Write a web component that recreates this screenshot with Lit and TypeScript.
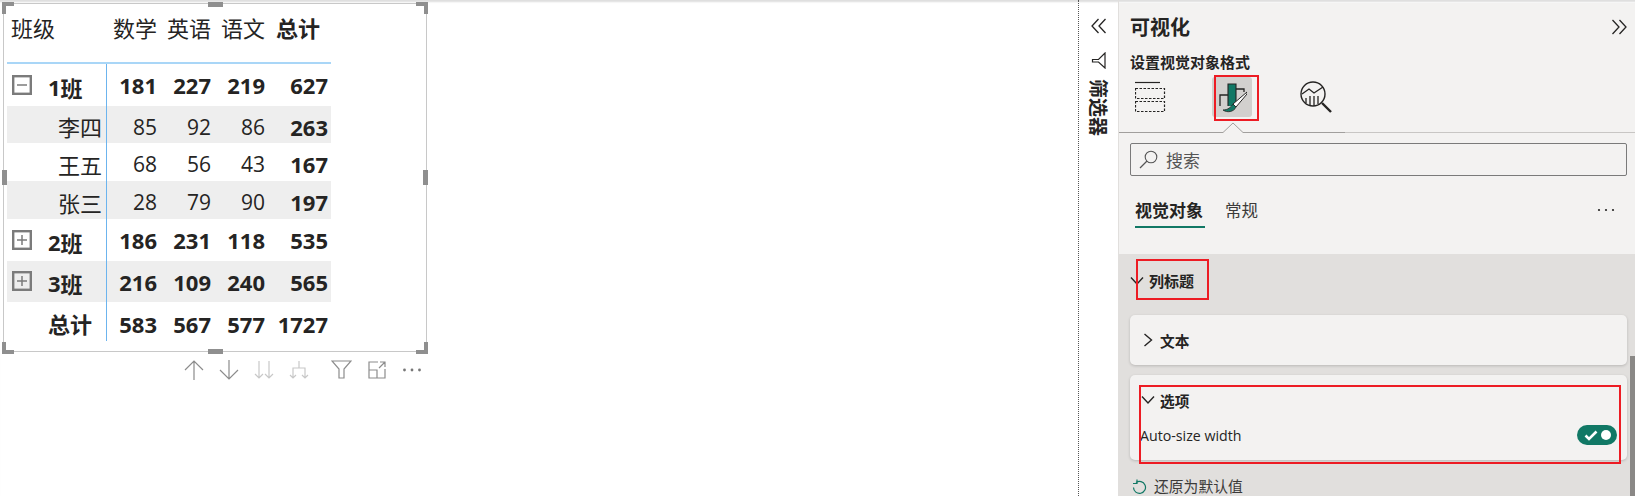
import { LitElement, html, css, svg } from "lit";
import { customElement } from "lit/decorators.js";

type Row = { label: string; num?: string; kind: "group" | "child" | "total"; box?: "plus" | "minus"; vals: number[]; alt?: boolean; h: number };

const rows: Row[] = [
  { label: "班", num: "1", kind: "group", box: "minus", vals: [181, 227, 219, 627], h: 42 },
  { label: "李四", kind: "child", vals: [85, 92, 86, 263], alt: true, h: 37 },
  { label: "王五", kind: "child", vals: [68, 56, 43, 167], h: 38 },
  { label: "张三", kind: "child", vals: [28, 79, 90, 197], alt: true, h: 38 },
  { label: "班", num: "2", kind: "group", box: "plus", vals: [186, 231, 118, 535], h: 42 },
  { label: "班", num: "3", kind: "group", box: "plus", vals: [216, 109, 240, 565], alt: true, h: 41 },
  { label: "总计", kind: "total", vals: [583, 567, 577, 1727], h: 39 },
];

const chevDown = svg`<path d="M1 1.5 L7 8 L13 1.5" fill="none" stroke="#252423" stroke-width="1.4"/>`;

@customElement("app-root")
export class AppRoot extends LitElement {
  static styles = css`
    :host { display: block; width: 1635px; height: 496px; overflow: hidden; background: #fff; color: #252423;
      font-family: "Open Sans", "Noto Sans CJK SC", sans-serif; }
    svg { display: block; flex: none; }
    .page { display: flex; height: 496px; box-shadow: inset 0 3px 2px -1px #dedede; }
    .canvas { flex: none; padding: 3px 0 0 3px; box-sizing: border-box; border-right: 1px dotted #555; width: 1079px; }
    .visual { position: relative; width: 424px; height: 349px; box-sizing: border-box; border: 1px solid #c8c8c8; padding-left: 3px; background: #fff; }
    .handle { position: absolute; background: #8f8f8f; }
    .h-t { left: 204px; top: -2px; width: 15px; height: 5px; }
    .h-b { left: 204px; bottom: -3px; width: 15px; height: 5px; }
    .h-l { left: -2px; top: 166px; width: 5px; height: 15px; }
    .h-r { right: -2px; top: 166px; width: 5px; height: 15px; }
    .corner { position: absolute; width: 12px; height: 12px; border: 0 solid #8f8f8f; box-sizing: border-box; }
    .c-tl { left: -2px; top: -2px; border-width: 4px 0 0 4px; }
    .c-tr { right: -2px; top: -2px; border-width: 4px 4px 0 0; }
    .c-bl { left: -2px; bottom: -3px; border-width: 0 0 4px 4px; }
    .c-br { right: -2px; bottom: -3px; border-width: 0 4px 4px 0; }
    .row { display: grid; grid-template-columns: 100px 54px 54px 54px 62px; width: 324px; align-items: center; font-size: 22px; }
    .head { height: 60px; box-sizing: border-box; border-bottom: 2px solid #a9d6f7; padding-bottom: 13px; font-family: "Noto Sans CJK SC", sans-serif; line-height: 30px; }
    .head > div { text-align: right; padding-right: 4px; white-space: nowrap; }
    .head > .first { text-align: left; padding-left: 4px; }
    .head > .tot { padding-right: 11px; font-weight: 700; }
    .alt { background: #eeeeee; }
    .label { display: flex; align-items: center; height: 100%; box-sizing: border-box; border-right: 1px solid #6cb4ee; padding: 3px 0 0 5px; font-family: "Noto Sans CJK SC", sans-serif; }
    .label.child { justify-content: flex-end; padding-right: 4px; padding-left: 0; }
    .label.bold { font-weight: 700; }
    .label.total { padding-left: 41px; }
    .box { margin: -4px 16px 0 0; flex: none; }
    .num { text-align: right; padding-right: 4px; font-size: 21px; line-height: 28px; }
    .num:last-child { padding-right: 3px; }
    .num.b, .lnum { font-weight: 700; font-size: 22px; }
    .num.low { padding-top: 4px; }
    .lnum { font-family: "Open Sans", sans-serif; }
    .toolbar { display: flex; align-items: center; gap: 15px; margin: 8px 0 0 181px; height: 20px; }
    .toolbar .sp { margin-left: 7px; }
    .filters { width: 40px; flex: none; border-right: 1px solid #e1dfdd; display: flex; flex-direction: column; align-items: center; padding-top: 18px; box-sizing: border-box; }
    .filter-ico { margin-top: 18px; }
    .vert { writing-mode: vertical-rl; text-orientation: sideways; font-weight: 700; font-size: 19px; line-height: 20px; margin-top: 10px; font-family: "Noto Sans CJK SC", sans-serif; }
    .pane { position: relative; flex: 1; background: #f3f2f1; margin-top: 3px; display: flex; flex-direction: column; min-width: 0; font-family: "Noto Sans CJK SC", sans-serif; }
    .top { padding: 0 8px 0 11px; height: 251px; box-sizing: border-box; flex: none; }
    .title-row { display: flex; justify-content: space-between; align-items: center; height: 36px; padding-top: 11px; box-sizing: border-box; }
    .title { font-size: 20px; font-weight: 700; line-height: 25px; }
    .sub { font-size: 15px; font-weight: 700; line-height: 20px; margin-top: 13px; }
    .icons { position: relative; display: flex; align-items: center; height: 40px; margin-top: 5px; }
    .ico-table { margin-left: 5px; }
    .sel { width: 40px; height: 40px; background: #d2d0ce; border-radius: 3px; display: flex; align-items: center; justify-content: center; margin-left: 46px; }
    .ico-an { margin-left: 48px; }
    .red { position: absolute; border: 2px solid #ed1c24; box-sizing: border-box; pointer-events: none; }
    .red-ico { left: 84px; top: -2px; width: 45px; height: 46px; }
    .rule { position: relative; height: 12px; margin: 5px -8px 0 -11px; }
    .search { display: flex; align-items: center; height: 33px; border: 1px solid #7a7a7a; border-radius: 2px; box-sizing: border-box; margin-top: 9px; padding-left: 8px; font-size: 17px; color: #555; gap: 8px; width: 497px; }
    .tabs { display: flex; align-items: flex-start; margin-top: 18px; font-size: 16.5px; line-height: 32px; padding-left: 5px; }
    .tab { height: 34px; box-sizing: border-box; }
    .tab.on { font-weight: 700; border-bottom: 2px solid #117865; width: 70px; font-size: 17px; white-space: nowrap; }
    .tab.off { margin-left: 20px; color: #3b3a39; }
    .more { margin-left: auto; margin-right: 12px; margin-top: 14px; }
    .gray { flex: 1; background: #e1dfdd; padding: 0 8px 0 11px; position: relative; }
    .sec { position: relative; display: flex; align-items: center; height: 61px; padding-bottom: 8px; box-sizing: border-box; gap: 5px; font-size: 15px; font-weight: 700; }
    .card { background: #f3f2f1; border-radius: 5px; box-shadow: 0 1px 3px rgba(0,0,0,.18); width: 497px; box-sizing: border-box; }
    .c1 { height: 50px; display: flex; align-items: center; padding-left: 13px; gap: 7px; font-size: 14.7px; font-weight: 700; }
    .c2 { position: relative; height: 85px; margin-top: 10px; padding: 16px 6px 0 11px; }
    .c2 .hd { display: flex; align-items: center; gap: 5px; height: 18px; font-size: 14.7px; font-weight: 700; }
    .c2 .auto { display: flex; justify-content: space-between; align-items: center; margin-top: 16px; height: 20px; padding-right: 4px; margin-left: -1px; font-family: "Open Sans", sans-serif; font-size: 14.2px; }
    .toggle { width: 40px; height: 20px; border-radius: 10px; background: #117865; display: flex; align-items: center; justify-content: space-between; padding: 0 6px 0 7px; box-sizing: border-box; }
    .knob { width: 10px; height: 10px; border-radius: 50%; background: #fff; }
    .reset { display: flex; align-items: center; gap: 7px; margin-top: 15px; padding-left: 2px; font-size: 14.8px; color: #3b3a39; line-height: 22px; }
    .red-sec { left: 6px; top: 5px; width: 73px; height: 41px; }
    .red-opt { left: 20px; top: 131px; width: 482px; height: 79px; }
    .scroll { position: absolute; right: 0; top: 102px; bottom: 0; width: 5px; background: #8a8886; }
  `;

  private box(kind: "plus" | "minus") {
    return html`<svg class="box" width="20" height="20" viewBox="0 0 20 20">
      <rect x="1.2" y="1.2" width="17.6" height="17.6" fill="none" stroke="#7b7b7b" stroke-width="2.4"/>
      <path d="M5 10H15" stroke="#7b7b7b" stroke-width="1.5"/>
      ${kind === "plus" ? svg`<path d="M10 5V15" stroke="#7b7b7b" stroke-width="1.5"/>` : ""}
    </svg>`;
  }

  private toolbar() {
    const s = "#8c8c8c", l = "#c8c8c8";
    return html`<div class="toolbar">
      <svg width="20" height="20" viewBox="0 0 20 20"><path d="M1 10L10 1L19 10M10 1V20" fill="none" stroke="${s}" stroke-width="1.2"/></svg>
      <svg width="20" height="20" viewBox="0 0 20 20"><path d="M1 10L10 19L19 10M10 19V0" fill="none" stroke="${s}" stroke-width="1.2"/></svg>
      <svg width="20" height="20" viewBox="0 0 20 20"><path d="M5 1V18M1 14L5 18L9 14M15 1V18M11 14L15 18L19 14" fill="none" stroke="${l}" stroke-width="1.2"/></svg>
      <svg width="20" height="20" viewBox="0 0 20 20"><path d="M10 1V8M4 18V8H16V18M1 15L4 18L7 15M13 15L16 18L19 15" fill="none" stroke="${l}" stroke-width="1.2"/></svg>
      <svg class="sp" width="21" height="20" viewBox="0 0 21 20"><path d="M1 1H20L13 9V18H8V9Z" fill="none" stroke="${s}" stroke-width="1.2"/></svg>
      <svg width="20" height="20" viewBox="0 0 20 20"><path d="M11 2H2V18H18V9M2 10H10V18M12 8L18 2M13 2H18V7" fill="none" stroke="${s}" stroke-width="1.2"/></svg>
      <svg width="20" height="20" viewBox="0 0 20 20"><circle cx="2.5" cy="10" r="1.4" fill="#777"/><circle cx="10" cy="10" r="1.4" fill="#777"/><circle cx="17.5" cy="10" r="1.4" fill="#777"/></svg>
    </div>`;
  }

  render() {
    return html`<div class="page">
      <div class="canvas">
        <div class="visual">
          <div class="row head">
            <div class="first">班级</div><div>数学</div><div>英语</div><div>语文</div><div class="tot">总计</div>
          </div>
          ${rows.map((r) => html`<div class="row ${r.alt ? "alt" : ""}" style="height:${r.h}px">
            <div class="label ${r.kind} ${r.kind !== "child" ? "bold" : ""}">
              ${r.box ? this.box(r.box) : ""}${r.num ? html`<span class="lnum">${r.num}</span>` : ""}<span>${r.label}</span>
            </div>
            ${r.vals.map((v, i) => html`<div class="num ${r.kind !== "child" || i === 3 ? "b" : ""} ${r.kind === "group" ? "" : "low"}">${v}</div>`)}
          </div>`)}
          <i class="handle h-t"></i><i class="handle h-b"></i><i class="handle h-l"></i><i class="handle h-r"></i>
          <i class="corner c-tl"></i><i class="corner c-tr"></i><i class="corner c-bl"></i><i class="corner c-br"></i>
        </div>
        ${this.toolbar()}
      </div>
      <div class="filters">
        <svg width="16" height="16" viewBox="0 0 16 16"><path d="M7.5 1L1 8L7.5 15M14.5 1L8 8L14.5 15" fill="none" stroke="#252423" stroke-width="1.3"/></svg>
        <svg class="filter-ico" width="15" height="17" viewBox="0 0 15 17"><path d="M14 1V16L7.5 10H1.5V7.5H7.5Z" fill="none" stroke="#252423" stroke-width="1.2"/></svg>
        <div class="vert">筛选器</div>
      </div>
      <div class="pane">
        <div class="top">
          <div class="title-row"><div class="title">可视化</div>
            <svg width="16" height="16" viewBox="0 0 16 16"><path d="M1.5 1L8 8L1.5 15M8.5 1L15 8L8.5 15" fill="none" stroke="#252423" stroke-width="1.3"/></svg>
          </div>
          <div class="sub">设置视觉对象格式</div>
          <div class="icons">
            <svg class="ico-table" width="31" height="32" viewBox="0 0 31 32"><path d="M0 1.5H25" stroke="#252423" stroke-width="1.2"/><rect x="0.5" y="7.5" width="29" height="10" fill="none" stroke="#252423" stroke-width="1.2" stroke-dasharray="2.5 1.5"/><rect x="0.5" y="20.5" width="29" height="10" fill="none" stroke="#252423" stroke-width="1.2" stroke-dasharray="2.5 1.5"/></svg>
            <div class="sel">
              <svg width="30" height="34" viewBox="0 0 30 34">
                <rect x="11" y="4" width="8" height="22" fill="#117865"/>
                <path d="M11 26V4H19V24" fill="none" stroke="#252423" stroke-width="1.1"/>
                <path d="M11 15H3V26M19 9H27V12" fill="none" stroke="#252423" stroke-width="1.3"/>
                <path d="M30 12L16 24L19 27L30 14Z" fill="#fff" stroke="#252423" stroke-width="1"/>
                <path d="M16 24C14 27 11 30 6 30C10 33 17 32 19 27Z" fill="#117865" stroke="#252423" stroke-width=".8"/>
              </svg>
            </div>
            <svg class="ico-an" width="33" height="33" viewBox="0 0 33 33">
              <circle cx="13" cy="13" r="12" fill="none" stroke="#252423" stroke-width="1.4"/>
              <path d="M2 13L9 8L14 12L23 6" fill="none" stroke="#252423" stroke-width="1.3"/>
              <path d="M6 17V22M10 15V24M14 15V25M18 15V23" stroke="#252423" stroke-width="1.3"/>
              <path d="M22 22L31 31" stroke="#252423" stroke-width="2.4"/>
            </svg>
            <div class="red red-ico"></div>
          </div>
          <div class="rule"><svg width="516" height="12" viewBox="0 0 516 12">
            <path d="M0 10.5H104L114 1L124 10.5H226" fill="none" stroke="#a19f9d" stroke-width="1"/>
            <path d="M226 10.5H516" fill="none" stroke="#c8c6c4" stroke-width="1"/></svg></div>
          <div class="search">
            <svg width="19" height="19" viewBox="0 0 19 19"><circle cx="12" cy="7" r="5.8" fill="none" stroke="#555" stroke-width="1.1"/><path d="M8 11L1 18" stroke="#555" stroke-width="1.2"/></svg>
            <span>搜索</span>
          </div>
          <div class="tabs">
            <div class="tab on">视觉对象</div><div class="tab off">常规</div>
            <svg class="more" width="18" height="4" viewBox="0 0 18 4"><circle cx="2" cy="2" r="1.1" fill="#252423"/><circle cx="9" cy="2" r="1.1" fill="#252423"/><circle cx="16" cy="2" r="1.1" fill="#252423"/></svg>
          </div>
        </div>
        <div class="gray">
          <div class="sec"><svg width="14" height="10" viewBox="0 0 14 10">${chevDown}</svg><span>列标题</span><div class="red red-sec"></div></div>
          <div class="card c1"><svg width="10" height="14" viewBox="0 0 10 14"><path d="M1.5 1L8.5 7L1.5 13" fill="none" stroke="#252423" stroke-width="1.4"/></svg><span>文本</span></div>
          <div class="card c2">
            <div class="hd"><svg width="14" height="10" viewBox="0 0 14 10">${chevDown}</svg><span>选项</span></div>
            <div class="auto"><span>Auto-size width</span>
              <div class="toggle"><svg width="14" height="11" viewBox="0 0 14 11"><path d="M1.5 5.5L5 9L12.5 1.5" fill="none" stroke="#fff" stroke-width="2.6"/></svg><i class="knob"></i></div>
            </div>
          </div>
          <div class="reset"><svg width="15" height="15" viewBox="0 0 15 15"><path d="M4 2.5A6 6 0 1 1 1.5 7.5" fill="none" stroke="#117865" stroke-width="1.2" transform="translate(0 1)"/><path d="M5 0.5V4.5H1" fill="none" stroke="#117865" stroke-width="1.2"/></svg><span>还原为默认值</span></div>
          <div class="red red-opt"></div>
          <div class="scroll"></div>
        </div>
      </div>
    </div>`;
  }
}
